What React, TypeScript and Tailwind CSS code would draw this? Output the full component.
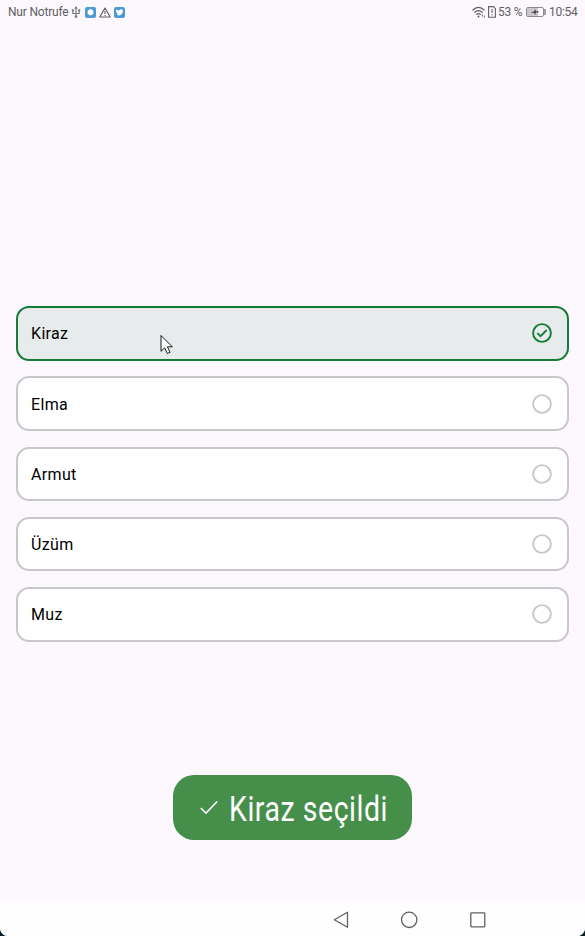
const fruits = ['Kiraz', 'Elma', 'Armut', 'Üzüm', 'Muz'];

function StatusBar() {
  return (
    <header className="flex h-6 items-center justify-between pl-2 pr-[8px] text-[12px] leading-6 text-[#606064]">
      <div className="flex items-center">
        <span className="w-[60px] whitespace-nowrap tracking-[-0.19px]">Nur Notrufe</span>
        <svg className="ml-[3px] h-3 w-[10px]" viewBox="0 0 10 12" fill="none" stroke="#77777b" strokeWidth="1.1">
          <path d="M5 1.5V10.5M1.8 4V7.5H8.2V4" />
          <path d="M5 0L3.2 2.8H6.8ZM3.8 9.5H6.2V11.8H3.8ZM.8 3.3H2.8V5.2H.8ZM7.2 3.3H9.2V5.2H7.2Z" fill="#77777b" stroke="none" />
        </svg>
        <svg className="ml-[4px] h-[11px] w-[11px]" viewBox="0 0 11 11">
          <rect width="11" height="11" rx="2" fill="#4b9ad6" />
          <path d="M5.5 2L8.3 3.4V6.2Q7.8 7.9 5.5 8.5Q3.2 7.9 2.7 6.2V3.4Z" fill="#fff" />
        </svg>
        <svg className="ml-[3px] h-[11px] w-3" viewBox="0 0 12 11" fill="none" stroke="#606064" strokeWidth="1.15">
          <path d="M6 1L11.2 10H.8ZM6 4V7M6 8V9" strokeLinejoin="round" />
        </svg>
        <svg className="ml-[3px] h-[11px] w-[11px]" viewBox="0 0 11 11">
          <rect width="11" height="11" rx="2" fill="#4b9ad6" />
          <path d="M2 2.4L4.8 3.6L6.5 2.2L9 2.8L8.6 5.8Q7.5 8.2 5 8.5L2.6 7.8L3.8 6.8L2.2 5Z" fill="#fff" />
        </svg>
      </div>
      <div className="flex items-center">
        <svg className="h-3 w-[14px]" viewBox="0 0 14 12" fill="none" stroke="#606064" strokeWidth="1.2">
          <path d="M.5 4.3Q6.5-1.5 12.5 4.3M2.3 6.6Q6.5 2.6 10.7 6.6M4.3 8.6Q6.5 6.6 8.7 8.6" />
          <circle cx="6.5" cy="10.5" r="1" fill="#606064" stroke="none" />
          <path d="M10.3 8.5V10.5M12.3 9.5V11.5" strokeWidth=".9" />
        </svg>
        <svg className="ml-[2px] h-3 w-2" viewBox="0 0 8 12" fill="none" stroke="#606064" strokeWidth="1.1">
          <path d="M.6.6H5.3L7.4 2.7V11.3H.6ZM4 3V7M4 8.2V9.5" />
        </svg>
        <span className="ml-[2px] w-[24px] whitespace-nowrap tracking-[-0.2px]">53 %</span>
        <svg className="ml-[4px] h-[10px] w-[20px]" viewBox="0 0 20 10" fill="none" stroke="#8b8a8e">
          <rect x=".5" y=".5" width="17" height="9" rx="1.5" />
          <rect x="1" y="1" width="11" height="8" fill="#c9c7cc" stroke="none" />
          <path d="M5.5 4.7H8L9 2L10 4.2H12.5V5.5H10L9 8L8 5.8H5.5Z" fill="#424246" stroke="none" />
          <path d="M19 2V8" strokeWidth="1.6" />
        </svg>
        <span className="ml-[3px] w-[28px] whitespace-nowrap tracking-[-0.3px]">10:54</span>
      </div>
    </header>
  );
}

function Choice({ label, selected }: { label: string; selected: boolean }) {
  return (
    <div
      className={`relative flex h-[54.6px] shrink-0 items-center justify-between rounded-[13px] border-2 pl-[13.5px] pr-[15px] ${
        selected ? 'border-[#147b38] bg-[#e7ebeb]' : 'border-[#c8c7ca] bg-white'
      }`}
    >
      <span className="pt-[2px] text-[16px] leading-6 tracking-[0.3px] text-black">{label}</span>
      <svg className="h-5 w-5" viewBox="0 0 20 20" fill="none" strokeWidth="1.9" stroke={selected ? '#147b38' : '#c8c7ca'}>
        <circle cx="10" cy="10" r="8.9" />
        {selected && <path d="M5.3 10.1L8.5 13.2L14.7 7" />}
      </svg>
      {selected && (
        <svg className="absolute left-[142px] top-[26px] h-[21px] w-[14px]" viewBox="0 0 14 21">
          <path d="M1 1.5V17.3L4.7 13.8L7.3 19.5L10 18.3L7.4 12.8H12.3Z" fill="#fff" stroke="#17181b" />
        </svg>
      )}
    </div>
  );
}

export default function App() {
  return (
    <div className="flex h-[936px] w-[585px] flex-col overflow-hidden bg-[#021e27] font-['Roboto',sans-serif]">
      <div className="flex min-h-0 flex-1 flex-col overflow-hidden rounded-b-[8px] bg-[#fcf8fe]">
        <StatusBar />
        <main className="flex flex-1 flex-col pl-[15.6px] pr-4 pt-[282.2px]">
          <div className="flex flex-col gap-[15.6px]">
            {fruits.map((fruit, i) => (
              <Choice key={fruit} label={fruit} selected={i === 0} />
            ))}
          </div>
          <div className="mt-[133.3px] flex h-[65.5px] w-[239.5px] items-center self-center rounded-[21px] bg-[#468f4b] pl-[27px] text-white">
            <svg className="h-[15px] w-[18px]" viewBox="0 0 18 15" fill="none" stroke="currentColor" strokeWidth="1.6">
              <path d="M.8 8L6 13L17.2 1.5" />
            </svg>
            <span className="ml-[11px] w-[160px] origin-left scale-x-[0.83] whitespace-nowrap pt-[3px] text-[34.3px] leading-10 tracking-[0.65px]">Kiraz seçildi</span>
          </div>
        </main>
        <nav className="flex h-[33px] shrink-0 items-center gap-[51.3px] bg-[#fefefe] pl-[333px]">
          <svg className="h-[18px] w-4" viewBox="0 0 16 18" fill="none" stroke="#626265" strokeWidth="1.3">
            <path d="M14.5 1.3V16.3L1.3 8.8Z" strokeLinejoin="round" />
          </svg>
          <svg className="h-[18px] w-[18px]" viewBox="0 0 18 18" fill="none" stroke="#626265" strokeWidth="1.3">
            <circle cx="9.2" cy="8.8" r="7.7" />
          </svg>
          <svg className="h-4 w-4" viewBox="0 0 16 16" fill="none" stroke="#626265" strokeWidth="1.3">
            <rect x=".8" y=".8" width="14" height="14" rx=".6" />
          </svg>
        </nav>
      </div>
    </div>
  );
}
